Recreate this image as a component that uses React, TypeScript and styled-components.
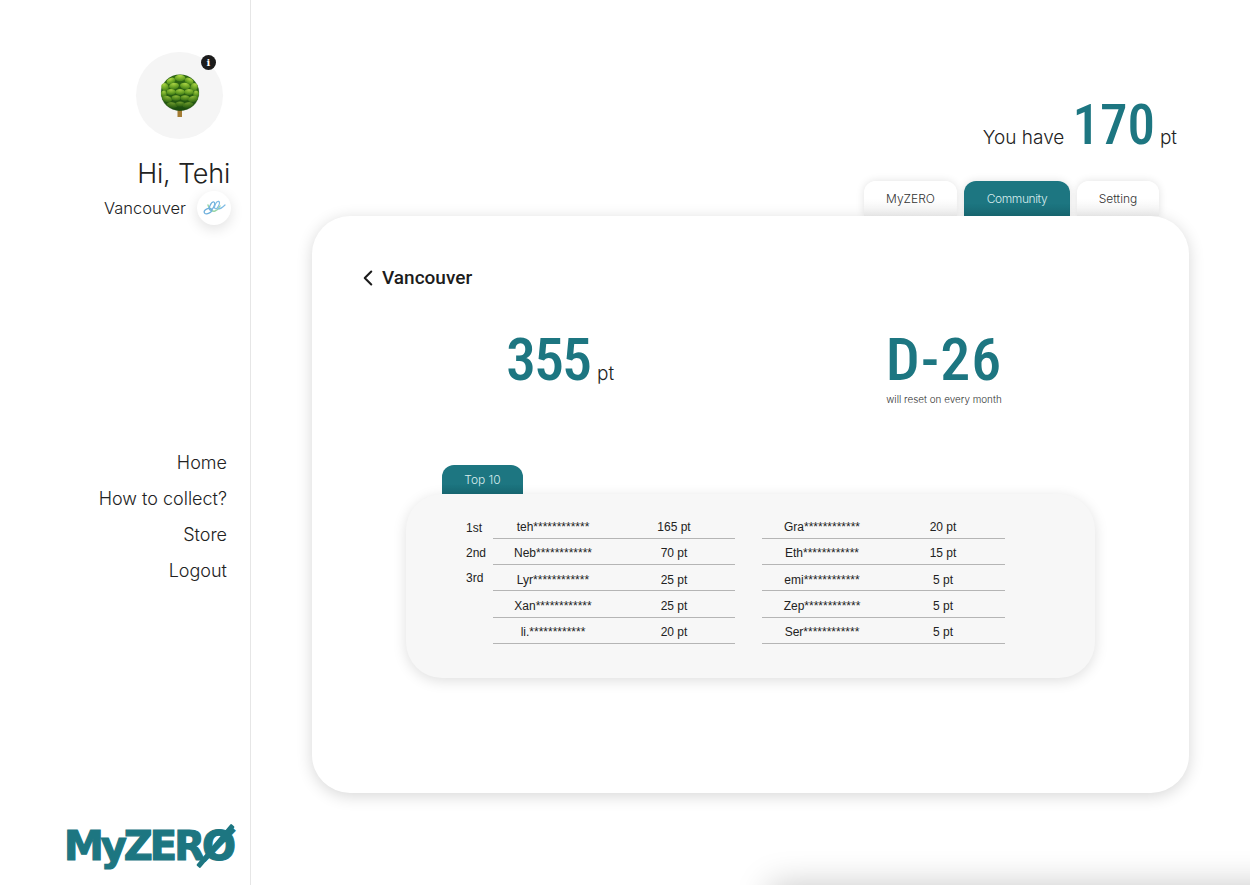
import React from "react";
import styled, { createGlobalStyle } from "styled-components";
import { ChevronLeft } from "lucide-react";

const teal = "#1d7681";
const tealFade = "linear-gradient(#1d7681 65%, #186a74)";
const light = '"Inter", "Liberation Sans", sans-serif';
const din = 'Roboto, "Liberation Sans", sans-serif';

const GlobalStyle = createGlobalStyle`
    html, body {
        margin: 0;
        height: 885px;
        overflow: hidden;
        background: #fff;
        color: #222;
        font-family: ${light};
    }
    * { box-sizing: border-box; }
`;

const Page = styled.div`
    position: relative;
    display: flex;
    width: 1250px;
    height: 885px;
    overflow: hidden;
`;

const Sidebar = styled.aside`
    display: flex;
    flex-direction: column;
    align-items: flex-end;
    width: 251px;
    height: 885px;
    padding: 52px 20px 14px 0;
    border-right: 1px solid #e6e6e6;
`;

const Avatar = styled.div`
    position: relative;
    display: flex;
    align-items: center;
    justify-content: center;
    width: 87px;
    height: 87px;
    margin-right: 7px;
    border-radius: 50%;
    background: #f5f5f5;
`;

const InfoBadge = styled.span`
    position: absolute;
    top: 3px;
    right: 7px;
    display: flex;
    align-items: center;
    justify-content: center;
    width: 15px;
    height: 15px;
    border-radius: 50%;
    background: #1c1c1c;
    color: #fff;
    font: 700 10px/15px "DejaVu Serif", serif;
`;

const Greeting = styled.h1`
    margin: 18px 0 0;
    font-size: 27px;
    line-height: 34px;
    font-weight: 300;
    letter-spacing: -0.2px;
    color: #222;
`;

const CityRow = styled.div`
    display: flex;
    align-items: center;
    gap: 11px;
    margin: 0 -1px 0 0;
    font-size: 16.5px;
    font-weight: 300;
`;

const CityBadge = styled.div`
    display: flex;
    align-items: center;
    justify-content: center;
    width: 34px;
    height: 34px;
    border-radius: 50%;
    background: #fff;
    box-shadow: 0 4px 14px rgba(0, 0, 0, 0.12);
`;

const Menu = styled.nav`
    display: flex;
    flex-direction: column;
    align-items: flex-end;
    gap: 13px;
    margin: 226px 3px 0 0;
`;

const MenuItem = styled.a`
    font-size: 18px;
    line-height: 23px;
    font-weight: 300;
    color: #222;
`;

const Logo = styled.div`
    position: relative;
    margin: auto -3px 0 0;
    font: 700 40px/50px "DejaVu Sans", sans-serif;
    letter-spacing: -3px;
    -webkit-text-stroke: 1.2px ${teal};
    color: ${teal};
`;

const LogoSlash = styled.span`
    position: absolute;
    right: 15px;
    top: -2px;
    width: 5px;
    height: 54px;
    border-radius: 1px;
    background: ${teal};
    transform: rotate(40deg);
`;

const Main = styled.main`
    display: flex;
    flex-direction: column;
    flex: 1;
`;

const Balance = styled.div`
    display: flex;
    align-items: baseline;
    justify-content: flex-end;
    height: 83px;
    margin-top: 98px;
    padding-right: 73px;
    font-size: 19px;
    font-weight: 300;
`;

const BigNumber = styled.span<{ $size: number; $spacing?: number }>`
    font-family: ${din};
    font-size: ${(p) => p.$size}px;
    font-stretch: 75%;
    font-weight: 500;
    letter-spacing: ${(p) => p.$spacing ?? 0}px;
    color: ${teal};
    line-height: 1;
`;

const BalanceNumber = styled(BigNumber)`
    margin: 0 5px 0 8px;
`;

const Tabs = styled.div`
    display: flex;
    justify-content: flex-end;
    gap: 7px;
    height: 35px;
    margin-right: 91px;
`;

const Tab = styled.div<{ $width: number; $active?: boolean }>`
    display: flex;
    align-items: center;
    justify-content: center;
    width: ${(p) => p.$width}px;
    height: 35px;
    border-radius: 12px 12px 0 0;
    font-size: 12px;
    font-weight: 300;
    padding-bottom: 1px;
    letter-spacing: ${(p) => (p.$active ? "-0.4px" : "0")};
    color: ${(p) => (p.$active ? "#d8ecee" : "#333")};
    background: ${(p) => (p.$active ? tealFade : "linear-gradient(#fff 50%, #f1f1f1)")};
    box-shadow: 0 0 8px rgba(0, 0, 0, 0.12);
`;

const Card = styled.section`
    position: relative;
    width: 877px;
    height: 577px;
    margin-left: 61px;
    padding: 49px 52px 0;
    border-radius: 38px;
    background: #fff;
    box-shadow: 0 3px 16px rgba(0, 0, 0, 0.16);
`;

const BackLink = styled.div`
    display: flex;
    align-items: center;
    gap: 1px;
    height: 26px;
    margin-left: -9px;
    font: 500 19px/26px Roboto, sans-serif;
    color: #1c1c1c;
`;

const Stats = styled.div`
    display: grid;
    grid-template-columns: 384px 384px;
    align-items: start;
    height: 135px;
    margin: 39px 0 0 4px;
`;

const Stat = styled.div`
    display: flex;
    flex-direction: column;
    align-items: center;
`;

const StatValue = styled.div`
    display: flex;
    align-items: baseline;
    gap: 7px;
    font-size: 19px;
    font-weight: 300;
`;

const StatNote = styled.div`
    font-size: 9.9px;
    line-height: 12px;
    margin-top: 3px;
    font-weight: 300;
    color: #333;
`;

const PanelWrap = styled.div`
    display: flex;
    flex-direction: column;
    align-items: flex-start;
    margin: 0 0 0 42px;
`;

const PanelTab = styled.div`
    display: flex;
    align-items: center;
    justify-content: center;
    width: 81px;
    height: 29px;
    margin-left: 36px;
    border-radius: 12px 12px 0 0;
    background: ${tealFade};
    color: #d8ecee;
    font-size: 12px;
    font-weight: 300;
`;

const Panel = styled.div`
    display: flex;
    width: 689px;
    height: 184px;
    padding: 18.5px 0 0 60px;
    border-radius: 36px;
    background: #f7f7f7;
    box-shadow: 0 3px 14px rgba(0, 0, 0, 0.13);
    font: 12px/16px "Liberation Sans", sans-serif;
    color: #222;
`;

const Ranks = styled.div`
    display: flex;
    flex-direction: column;
    gap: 9.3px;
    width: 27px;
    padding-top: 7px;
`;

const Board = styled.div`
    width: 242px;
    & + & {
        width: 243px;
        margin-left: 27px;
    }
`;

const Row = styled.div`
    display: grid;
    grid-template-columns: 120px 122px;
    align-items: center;
    height: 26.25px;
    padding-top: 4px;
    border-bottom: 1px solid #b5b5b5;
    text-align: center;
`;

const Shadow = styled.div`
    position: absolute;
    left: 770px;
    top: 885px;
    width: 600px;
    height: 60px;
    box-shadow: 0 0 34px rgba(0, 0, 0, 0.22);
`;

const left = [
    ["teh", "165 pt"],
    ["Neb", "70 pt"],
    ["Lyr", "25 pt"],
    ["Xan", "25 pt"],
    ["li.", "20 pt"],
];

const right = [
    ["Gra", "20 pt"],
    ["Eth", "15 pt"],
    ["emi", "5 pt"],
    ["Zep", "5 pt"],
    ["Ser", "5 pt"],
];

// leaf clusters of the tree: cx, cy, rx, ry, tilt
const clumps = [
    [20, 4, 5.4, 3.2, 0], [11, 7, 4.5, 3, -25], [29, 7, 4.5, 3, 25],
    [5, 13, 3.6, 4, -20], [14, 12, 5, 3.2, -8], [25, 12, 5, 3.2, 8], [34, 13, 3.6, 4, 20],
    [3.8, 20, 2.8, 3.6, 0], [11, 18, 4.5, 3, 0], [20, 18, 5, 3, 0], [29, 18, 4.5, 3, 0], [36, 20, 2.8, 3.6, 0],
    [7, 25, 5, 3.2, 15], [16, 24, 4.5, 2.8, 0], [25, 24, 4.5, 2.8, 0], [33, 25, 5, 3.2, -15],
    [12, 31, 5.4, 2.8, 10], [20, 30, 4.5, 2.6, 0], [28, 31, 5.4, 2.8, -10],
];

const Tree = () => (
    <svg width="40" height="44" viewBox="0 0 40 44">
        <defs>
            <radialGradient id="clump" cx="50%" cy="15%" r="85%">
                <stop offset="0%" stopColor="#b4dc48" />
                <stop offset="60%" stopColor="#72ad26" />
                <stop offset="100%" stopColor="#4a861a" />
            </radialGradient>
            <linearGradient id="shade" x1="0" y1="0" x2="0" y2="1">
                <stop offset="0%" stopColor="#123f0c" stopOpacity="0" />
                <stop offset="50%" stopColor="#123f0c" stopOpacity="0.12" />
                <stop offset="100%" stopColor="#123f0c" stopOpacity="0.7" />
            </linearGradient>
        </defs>
        <rect x="17.5" y="32" width="4.5" height="11" fill="#a47c34" />
        <ellipse cx="20" cy="18.5" rx="19" ry="18" fill="#2e6613" />
        {clumps.map(([x, y, rx, ry, tilt]) => (
            <ellipse
                key={`${x}-${y}`}
                cx={x}
                cy={y}
                rx={rx}
                ry={ry}
                transform={`rotate(${tilt} ${x} ${y})`}
                fill="url(#clump)"
            />
        ))}
        <ellipse cx="20" cy="18.5" rx="19.5" ry="18.5" fill="url(#shade)" />
    </svg>
);

const CityMark = () => (
    <svg width="24" height="18" viewBox="0 0 24 18" fill="none" strokeLinecap="round">
        <path d="M6 6c1 4 4 7 7 6s4-3 5-5" stroke="#9ad6a6" strokeWidth="1.4" />
        <ellipse cx="6" cy="12" rx="4" ry="2.4" transform="rotate(-25 6 12)" stroke="#6fb0dc" strokeWidth="1.3" />
        <ellipse cx="10" cy="7" rx="2" ry="4.4" transform="rotate(25 10 7)" stroke="#6fb0dc" strokeWidth="1.3" />
        <ellipse cx="15" cy="6" rx="1.8" ry="4" transform="rotate(25 15 6)" stroke="#7dbbe4" strokeWidth="1.2" />
        <path d="M16 10c3 0 5-2 7-4" stroke="#7dbbe4" strokeWidth="1.2" />
    </svg>
);

const App: React.FC = () => {
    return (
        <Page>
            <GlobalStyle />
            <Sidebar>
                <Avatar>
                    <Tree />
                    <InfoBadge>i</InfoBadge>
                </Avatar>
                <Greeting>Hi, Tehi</Greeting>
                <CityRow>
                    Vancouver
                    <CityBadge>
                        <CityMark />
                    </CityBadge>
                </CityRow>
                <Menu>
                    <MenuItem>Home</MenuItem>
                    <MenuItem>How to collect?</MenuItem>
                    <MenuItem>Store</MenuItem>
                    <MenuItem>Logout</MenuItem>
                </Menu>
                <Logo>
                    MyZERØ
                    <LogoSlash />
                </Logo>
            </Sidebar>
            <Main>
                <Balance>
                    You have
                    <BalanceNumber $size={55}>170</BalanceNumber>
                    pt
                </Balance>
                <Tabs>
                    <Tab $width={93}>MyZERO</Tab>
                    <Tab $width={106} $active>Community</Tab>
                    <Tab $width={82}>Setting</Tab>
                </Tabs>
                <Card>
                    <BackLink>
                        <ChevronLeft size={26} strokeWidth={1.9} />
                        Vancouver
                    </BackLink>
                    <Stats>
                        <Stat>
                            <StatValue>
                                <BigNumber $size={60} $spacing={-2}>355</BigNumber>
                                pt
                            </StatValue>
                        </Stat>
                        <Stat>
                            <StatValue>
                                <BigNumber $size={60} $spacing={1}>D-26</BigNumber>
                            </StatValue>
                            <StatNote>will reset on every month</StatNote>
                        </Stat>
                    </Stats>
                    <PanelWrap>
                        <PanelTab>Top 10</PanelTab>
                        <Panel>
                            <Ranks>
                                <span>1st</span>
                                <span>2nd</span>
                                <span>3rd</span>
                            </Ranks>
                            <Board>
                                {left.map(([name, points]) => (
                                    <Row key={name}>
                                        <span>{name}************</span>
                                        <span>{points}</span>
                                    </Row>
                                ))}
                            </Board>
                            <Board>
                                {right.map(([name, points]) => (
                                    <Row key={name}>
                                        <span>{name}************</span>
                                        <span>{points}</span>
                                    </Row>
                                ))}
                            </Board>
                        </Panel>
                    </PanelWrap>
                </Card>
            </Main>
            <Shadow />
        </Page>
    );
};

export default App;
